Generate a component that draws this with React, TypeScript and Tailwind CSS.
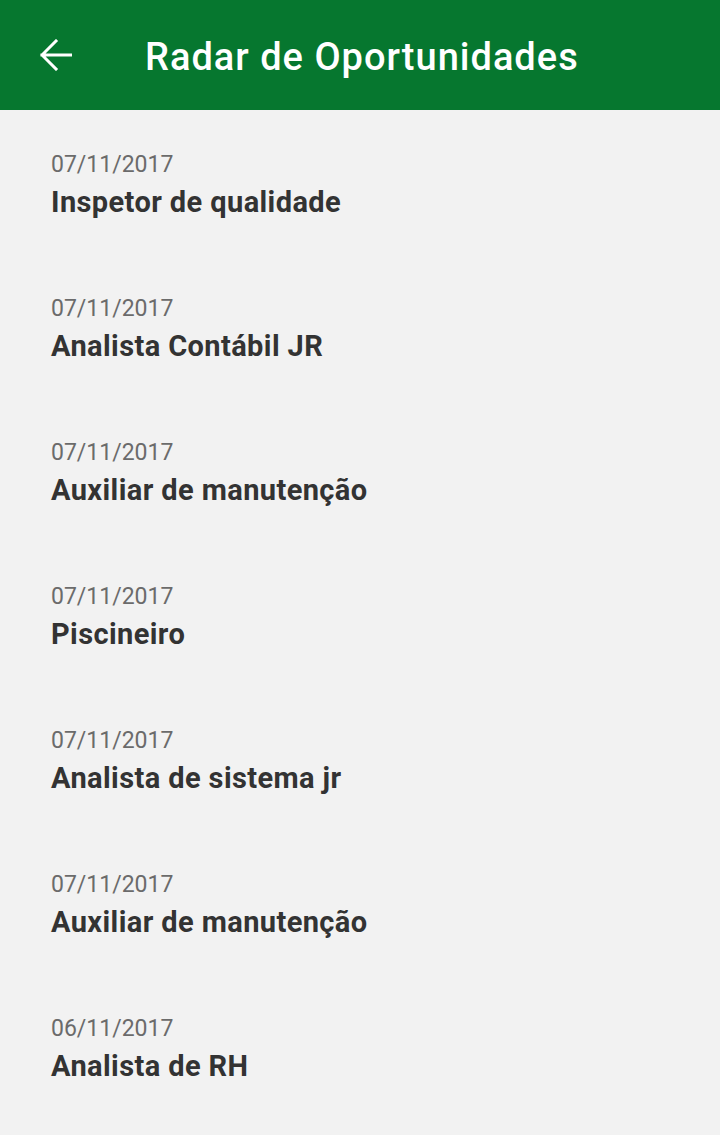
import React from 'react';

interface Vaga {
  data: string;
  titulo: string;
}

const vagas: Vaga[] = [
  { data: '07/11/2017', titulo: 'Inspetor de qualidade' },
  { data: '07/11/2017', titulo: 'Analista Contábil JR' },
  { data: '07/11/2017', titulo: 'Auxiliar de manutenção' },
  { data: '07/11/2017', titulo: 'Piscineiro' },
  { data: '07/11/2017', titulo: 'Analista de sistema jr' },
  { data: '07/11/2017', titulo: 'Auxiliar de manutenção' },
  { data: '06/11/2017', titulo: 'Analista de RH' }
];

const App: React.FC = () => {
  return (
    <div className="min-h-[1135px] bg-[#f2f2f2] font-['Roboto',sans-serif]">
      <header className="h-[110px] bg-[#06772f] flex items-center">
        <button className="ml-[40px] w-[32px] h-[32px] flex items-center justify-center">
          <svg width="32" height="32" viewBox="0 0 32 32" fill="none">
            <path
              d="M2 16H32M16 2L2 16L16 30"
              stroke="white"
              strokeWidth={3}
              strokeLinecap="square"
              strokeLinejoin="miter"
            />
          </svg>
        </button>
        <h1 className="ml-[73px] mt-[4px] text-white text-[38px] tracking-[1px] font-medium leading-none">
          Radar de Oportunidades
        </h1>
      </header>

      <ul>
        {vagas.map((vaga, index) => (
          <li key={index} className="pl-[51px] pt-[41px] pb-[34px]">
            <div className="text-[23px] leading-[28px] text-[#6b6b6b]">
              {vaga.data}
            </div>
            <div className="mt-[5px] text-[29px] tracking-[0.4px] leading-[36px] font-bold text-[#333333]">
              {vaga.titulo}
            </div>
          </li>
        ))}
      </ul>
    </div>
  );
};

export default App;
